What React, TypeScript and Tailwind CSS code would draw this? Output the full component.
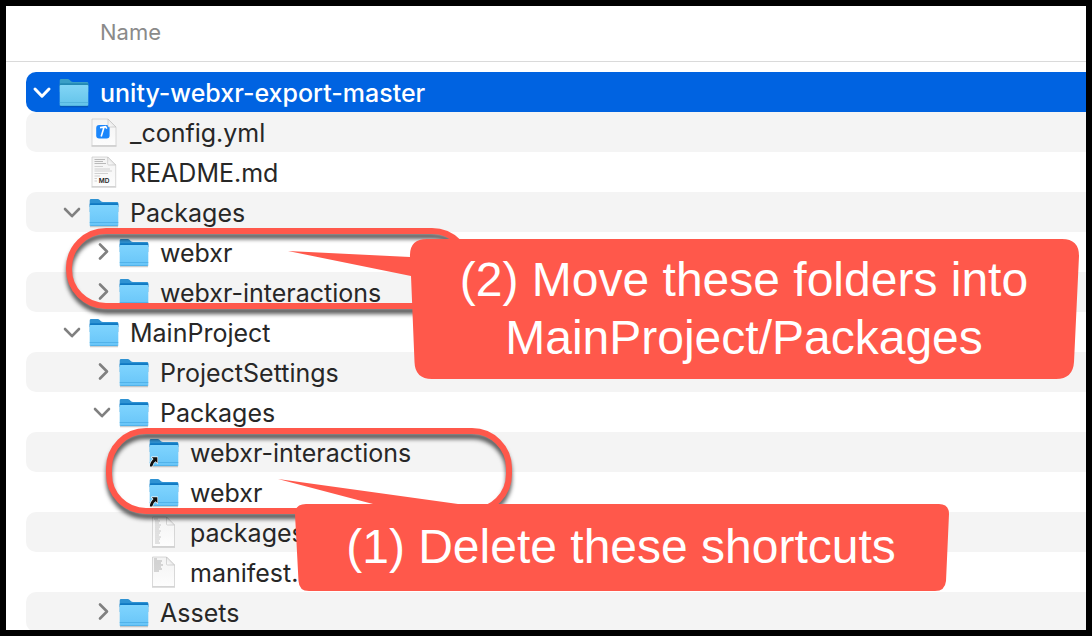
import type { ReactNode } from "react";

type IconKind = "folder" | "alias" | "config" | "markdown" | "lines" | "manifest";

type Entry = {
  name: string;
  level: 0 | 1 | 2 | 3;
  icon: IconKind;
  open?: boolean;
  selected?: boolean;
};

const entries: Entry[] = [
  { name: "unity-webxr-export-master", level: 0, icon: "folder", open: true, selected: true },
  { name: "_config.yml", level: 1, icon: "config" },
  { name: "README.md", level: 1, icon: "markdown" },
  { name: "Packages", level: 1, icon: "folder", open: true },
  { name: "webxr", level: 2, icon: "folder", open: false },
  { name: "webxr-interactions", level: 2, icon: "folder", open: false },
  { name: "MainProject", level: 1, icon: "folder", open: true },
  { name: "ProjectSettings", level: 2, icon: "folder", open: false },
  { name: "Packages", level: 2, icon: "folder", open: true },
  { name: "webxr-interactions", level: 3, icon: "alias" },
  { name: "webxr", level: 3, icon: "alias" },
  { name: "packages", level: 3, icon: "lines" },
  { name: "manifest.", level: 3, icon: "manifest" },
  { name: "Assets", level: 2, icon: "folder", open: false },
];

const indents = ["pl-1.5", "pl-9", "pl-[66px]", "pl-24"];

function Gradients() {
  return (
    <svg className="absolute size-0" aria-hidden="true">
      <defs>
        <linearGradient id="front" x1="0" y1="0" x2="0" y2="1">
          <stop offset="0" stopColor="#7fd4fe" />
          <stop offset="1" stopColor="#68c5f8" />
        </linearGradient>
        <linearGradient id="frontSelected" x1="0" y1="0" x2="0" y2="1">
          <stop offset="0" stopColor="#81d5f5" />
          <stop offset="1" stopColor="#63c3ea" />
        </linearGradient>
        <linearGradient id="paper" x1="0" y1="0" x2="0" y2="1">
          <stop offset="0" stopColor="#f3f3f3" />
          <stop offset="1" stopColor="#fdfdfd" />
        </linearGradient>
        <linearGradient id="fold" x1="0" y1="1" x2="1" y2="0">
          <stop offset="0" stopColor="#ffffff" />
          <stop offset="1" stopColor="#d4d4d4" />
        </linearGradient>
      </defs>
    </svg>
  );
}

function FolderIcon({ selected, alias }: { selected?: boolean; alias?: boolean }) {
  return (
    <svg viewBox="0 0 32 40" className="h-10 w-8 shrink-0" aria-hidden="true">
      <path d="M2 33.5h28v1.8H2z" fill="#000" opacity=".18" />
      <path
        d="M1.7 8.4Q1.7 7 3.1 7H9.6Q10.8 7 11.7 7.9L13 9.2Q13.8 10 15 10H29Q30.3 10 30.3 11.3V20H1.7Z"
        fill={selected ? "#3a9fc6" : "#2f93d3"}
      />
      <path d="M1.7 12Q1.7 11.2 3 11.2H29Q30.3 11.2 30.3 12V15H1.7Z" fill={selected ? "#2389b4" : "#0f78c2"} />
      <path
        d="M1.7 14Q1.7 13 2.7 13H29.3Q30.3 13 30.3 14V32.6Q30.3 34 28.9 34H3.1Q1.7 34 1.7 32.6Z"
        fill={selected ? "url(#frontSelected)" : "url(#front)"}
      />
      <path d="M1.7 30.5H30.3M1.7 33.6H30.3" stroke={selected ? "#45a8d3" : "#3fa5df"} strokeWidth=".6" />
      {alias && (
        <path
          d="M3.8 25.2H9.4V31L7.6 29.3Q4.6 31 4.2 34.6H1.9Q1.8 30.2 5.5 27Z"
          fill="#111"
          stroke="#fff"
          strokeWidth="1.3"
          strokeLinejoin="round"
          paintOrder="stroke"
        />
      )}
    </svg>
  );
}

function Paper({ top, left, right, bottom, children }: { top: number; left: number; right: number; bottom: number; children?: ReactNode }) {
  const corner = 8;
  return (
    <svg viewBox="0 0 32 40" className="h-10 w-8 shrink-0" aria-hidden="true">
      <path d={`M${left - 0.5} ${bottom}H${right + 0.5}V${bottom + 1}H${left - 0.5}Z`} fill="#000" opacity=".25" />
      <path
        d={`M${left} ${top}H${right - corner}L${right} ${top + corner}V${bottom}H${left}Z`}
        fill="url(#paper)"
        stroke="#c9c9c9"
        strokeWidth=".7"
      />
      {children}
      <path
        d={`M${right - corner} ${top}L${right} ${top + corner}H${right - corner + 1}Q${right - corner} ${top + corner} ${right - corner} ${top + corner - 1}Z`}
        fill="url(#fold)"
        stroke="#bdbdbd"
        strokeWidth=".6"
      />
    </svg>
  );
}

function FileIcon({ kind, selected }: { kind: IconKind; selected?: boolean }) {
  switch (kind) {
    case "config":
      return (
        <Paper top={7} left={4} right={28} bottom={33.5}>
          <rect x="8.2" y="13" width="13.4" height="13.4" rx="3" fill="#1b86fb" />
          <path d="M12 15.6L17.6 14.6L18.8 16.6M16 15.2L13.2 24.4" fill="none" stroke="#fff" strokeWidth="1.6" />
        </Paper>
      );
    case "markdown":
      return (
        <Paper top={5} left={4} right={27.7} bottom={34.5}>
          <path d="M6.500 7.500H17M6.500 9.500H15M6.500 11.500H18" stroke="#a9a9a9" strokeWidth=".8" />
          <path
            d="M6.500 14.500H15M6.500 17H22M6.500 19H24M6.500 21.500H20M6.500 24H12M6.500 26.500H9M6.500 29H9"
            stroke="#c6c6c6"
            strokeWidth=".8"
          />
          <text x="16" y="31" textAnchor="middle" fontSize="6.5" fontWeight="600" fontFamily="Inter, sans-serif" fill="#222">
            MD
          </text>
        </Paper>
      );
    case "lines":
      return (
        <Paper top={5} left={4.5} right={26.5} bottom={34.5}>
          <path
            d="M6 7H10M7 9H12M7 11H11M7 13H13M7 15H12M7 17H11M7 19H13M7 21H12M7 23H11M7 25H13M7 27H12M7 29H11M7 31H12"
            stroke="#c2c2c2"
            strokeWidth=".9"
          />
        </Paper>
      );
    case "manifest":
      return (
        <Paper top={5} left={4.5} right={26.5} bottom={34.5}>
          <path d="M6 7H9M6 9H14M6 11H13M6 13H15M6 15H13M6 17H14M6 19H11" stroke="#aaa" strokeWidth=".9" />
        </Paper>
      );
    default:
      return <FolderIcon selected={selected} alias={kind === "alias"} />;
  }
}

function Disclosure({ entry }: { entry: Entry }) {
  if (entry.open === undefined) return <span className="w-5 shrink-0" />;
  return (
    <button
      type="button"
      aria-expanded={entry.open}
      aria-label={entry.name}
      className={`flex w-5 shrink-0 justify-center ${entry.selected ? "text-white" : "text-[#808080]"}`}
    >
      <svg viewBox="0 0 20 20" className="size-5" fill="none" stroke="currentColor" strokeWidth={entry.selected ? 3 : 2.6} strokeLinecap="round" strokeLinejoin="round">
        <path d={entry.open ? "M3 7L10 14.2L17 7" : "M8 2.5L15 9.5L8 16.5"} />
      </svg>
    </button>
  );
}

function Row({ entry }: { entry: Entry }) {
  return (
    <li
      role="treeitem"
      aria-level={entry.level + 1}
      aria-selected={!!entry.selected}
      className={`flex h-10 items-center rounded-l-[10px] ${indents[entry.level]} ${
        entry.selected ? "bg-[#0063e1] font-medium text-white" : "text-[#272727] even:bg-[#f4f4f4]"
      }`}
    >
      <Disclosure entry={entry} />
      <span className="ml-1.5 flex">
        <FileIcon kind={entry.icon} selected={entry.selected} />
      </span>
      <span className="mt-0.5 ml-2.5 text-[25px] leading-9 whitespace-nowrap">{entry.name}</span>
    </li>
  );
}

function Ring({ className }: { className: string }) {
  return (
    <div
      className={`pointer-events-none absolute w-[406px] rounded-[40px] border-[6px] border-[#ff584b] drop-shadow-[0_5px_2px_rgba(0,0,0,0.65)] ${className}`}
    />
  );
}

export default function App() {
  return (
    <main className="relative h-screen overflow-hidden border-[6px] border-black bg-white font-['Inter',sans-serif]">
      <Gradients />
      <header className="flex h-14 items-center border-b border-[#dadada] pb-1 pl-[94px]">
        <h1 className="text-[22px] leading-7 text-[#8a8a8a]">Name</h1>
      </header>

      <ul role="tree" aria-label="Name" className="mt-2.5 ml-5">
        {entries.map((entry, index) => (
          <Row key={index} entry={entry} />
        ))}
      </ul>

      <Ring className="top-[222px] left-[60px] h-[81px]" />
      <Ring className="top-[422px] left-[100px] h-[86px]" />

      <aside className="absolute top-[233px] left-[404px] flex h-[140px] w-[670px] items-center justify-center pr-0.5 font-['Liberation_Sans',Arial,sans-serif] text-white">
        <svg viewBox="0 0 670 140" className="absolute inset-0 size-full overflow-visible" fill="#ff584b" aria-hidden="true">
          <path d="M17 0H652Q669 0 669 17L664 123Q663 140 646 140H22Q5 140 4.500 123L1 37L-122 12L0 18Q-1 0 17 0Z" />
        </svg>
        <p className="relative text-center text-5xl leading-[58px] whitespace-nowrap">
          (2) Move these folders into
          <br />
          MainProject/Packages
        </p>
      </aside>

      <aside className="absolute top-[498px] left-[289px] flex h-[87px] w-[654px] items-center justify-center pr-0.5 pb-0.5 font-['Liberation_Sans',Arial,sans-serif] text-white">
        <svg viewBox="0 0 654 87" className="absolute inset-0 size-full overflow-visible" fill="#ff584b" aria-hidden="true">
          <path d="M11 0H78L-17 -25L163 0H644Q654 0 654 10L651 77Q650 87 640 87H14Q4 87 3.500 77L0 10Q0 0 11 0Z" />
        </svg>
        <p className="relative text-5xl leading-[58px] whitespace-nowrap">(1) Delete these shortcuts</p>
      </aside>
    </main>
  );
}
